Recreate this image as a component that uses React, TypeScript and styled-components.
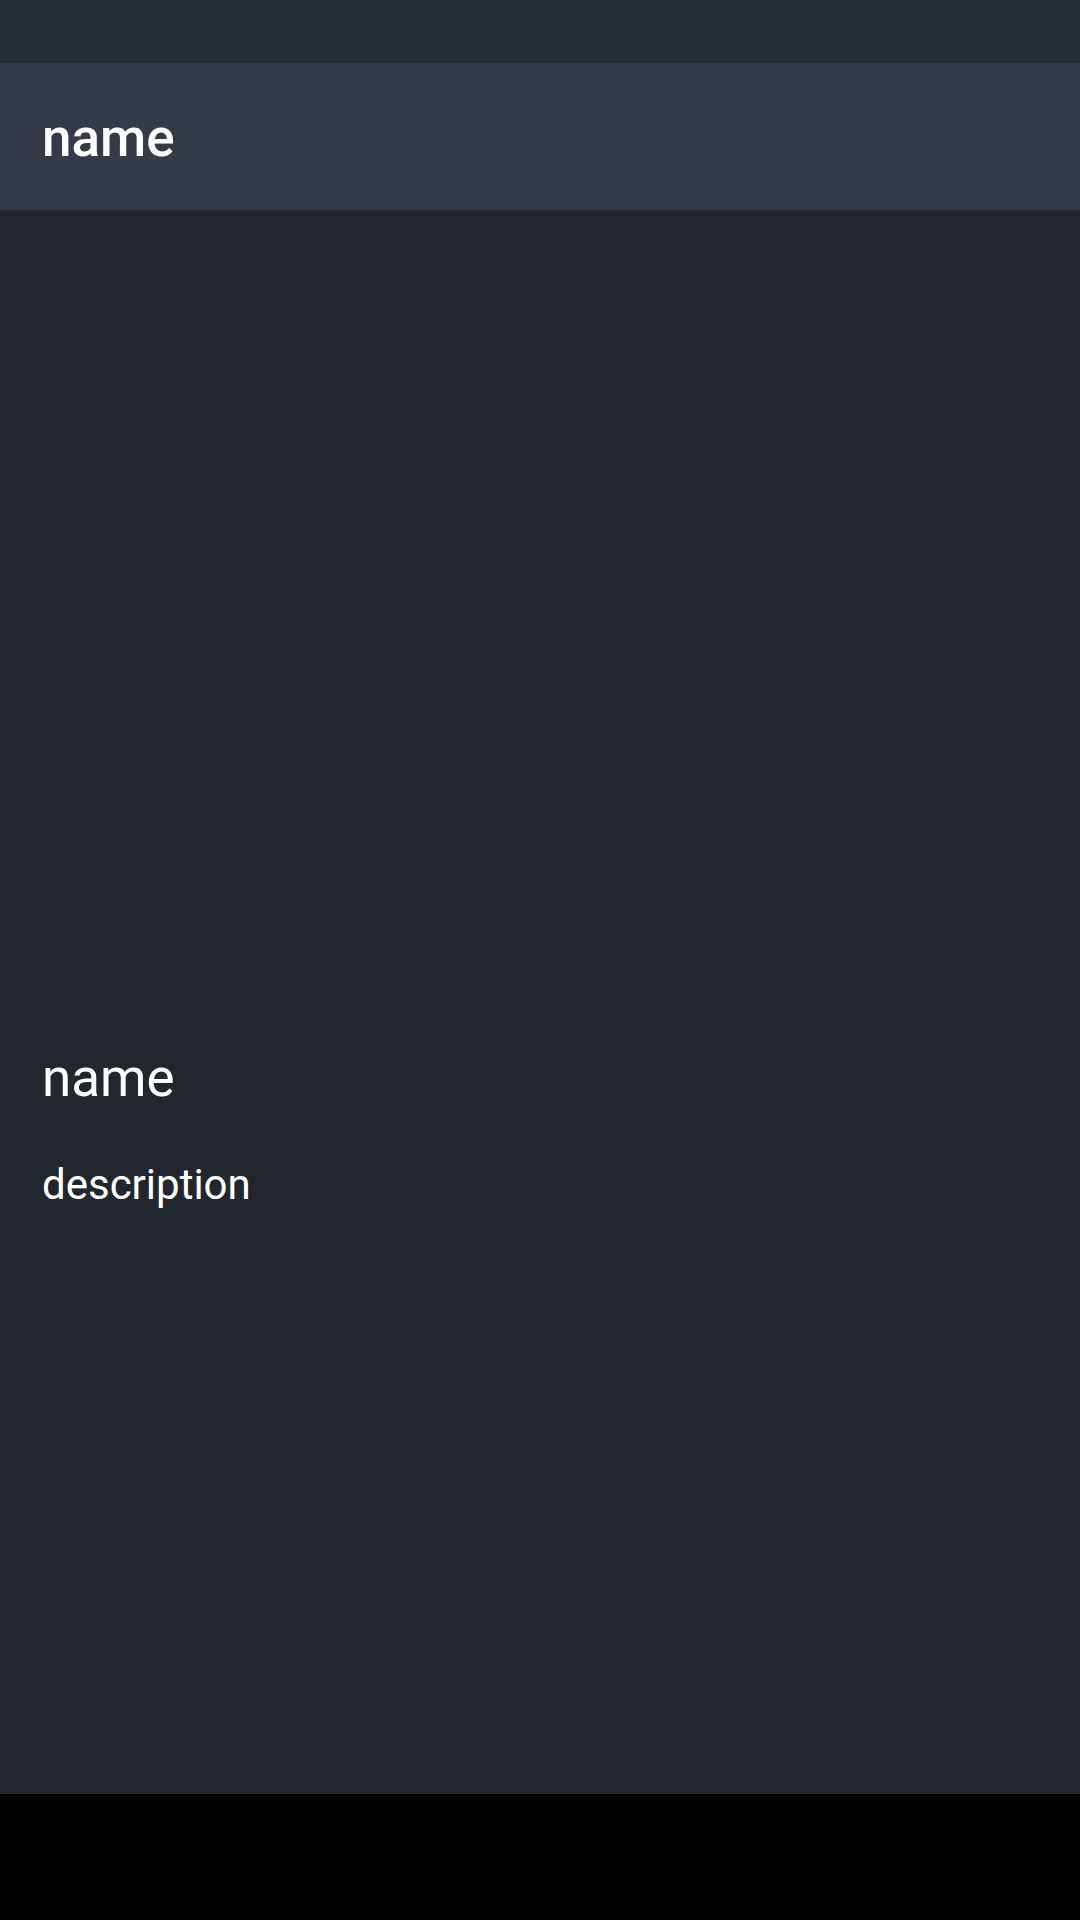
import React from "react";
import styled, { createGlobalStyle } from "styled-components";

const GlobalStyle = createGlobalStyle`
  html, body {
    margin: 0;
    padding: 0;
    background: #000000;
  }
  body {
    font-family: Roboto, "Noto Sans", sans-serif;
    -webkit-font-smoothing: antialiased;
  }
`;

const Screen = styled.div`
  width: 1080px;
  height: 1920px;
  display: flex;
  flex-direction: column;
  background: #000000;
`;

const StatusBar = styled.div`
  height: 63px;
  flex-shrink: 0;
  background: #262c36;
`;

const Toolbar = styled.header`
  height: 147px;
  flex-shrink: 0;
  display: flex;
  align-items: center;
  padding: 4px 42px 0;
  box-sizing: border-box;
  background: #343a46;
`;

const ToolbarTitle = styled.h1`
  margin: 0;
  font-size: 53px;
  font-weight: 500;
  line-height: 1.172;
  color: #ffffff;
`;

const Content = styled.main`
  flex: 1;
  display: flex;
  flex-direction: column;
  padding: 837px 42px 0;
  box-sizing: border-box;
  background: #22272e;
`;

const Heading = styled.h2`
  margin: 0;
  font-size: 53px;
  font-weight: 400;
  line-height: 1.172;
  color: #ffffff;
`;

const Description = styled.p`
  margin: 51px 0 0;
  font-size: 42px;
  font-weight: 400;
  line-height: 1.172;
  color: #ffffff;
`;

const NavBar = styled.div`
  height: 126px;
  flex-shrink: 0;
  background: #000000;
`;

const App = () => {
  return (
    <>
      <GlobalStyle />
      <Screen>
        <StatusBar />
        <Toolbar>
          <ToolbarTitle>name</ToolbarTitle>
        </Toolbar>
        <Content>
          <Heading>name</Heading>
          <Description>description</Description>
        </Content>
        <NavBar />
      </Screen>
    </>
  );
};

export default App;
